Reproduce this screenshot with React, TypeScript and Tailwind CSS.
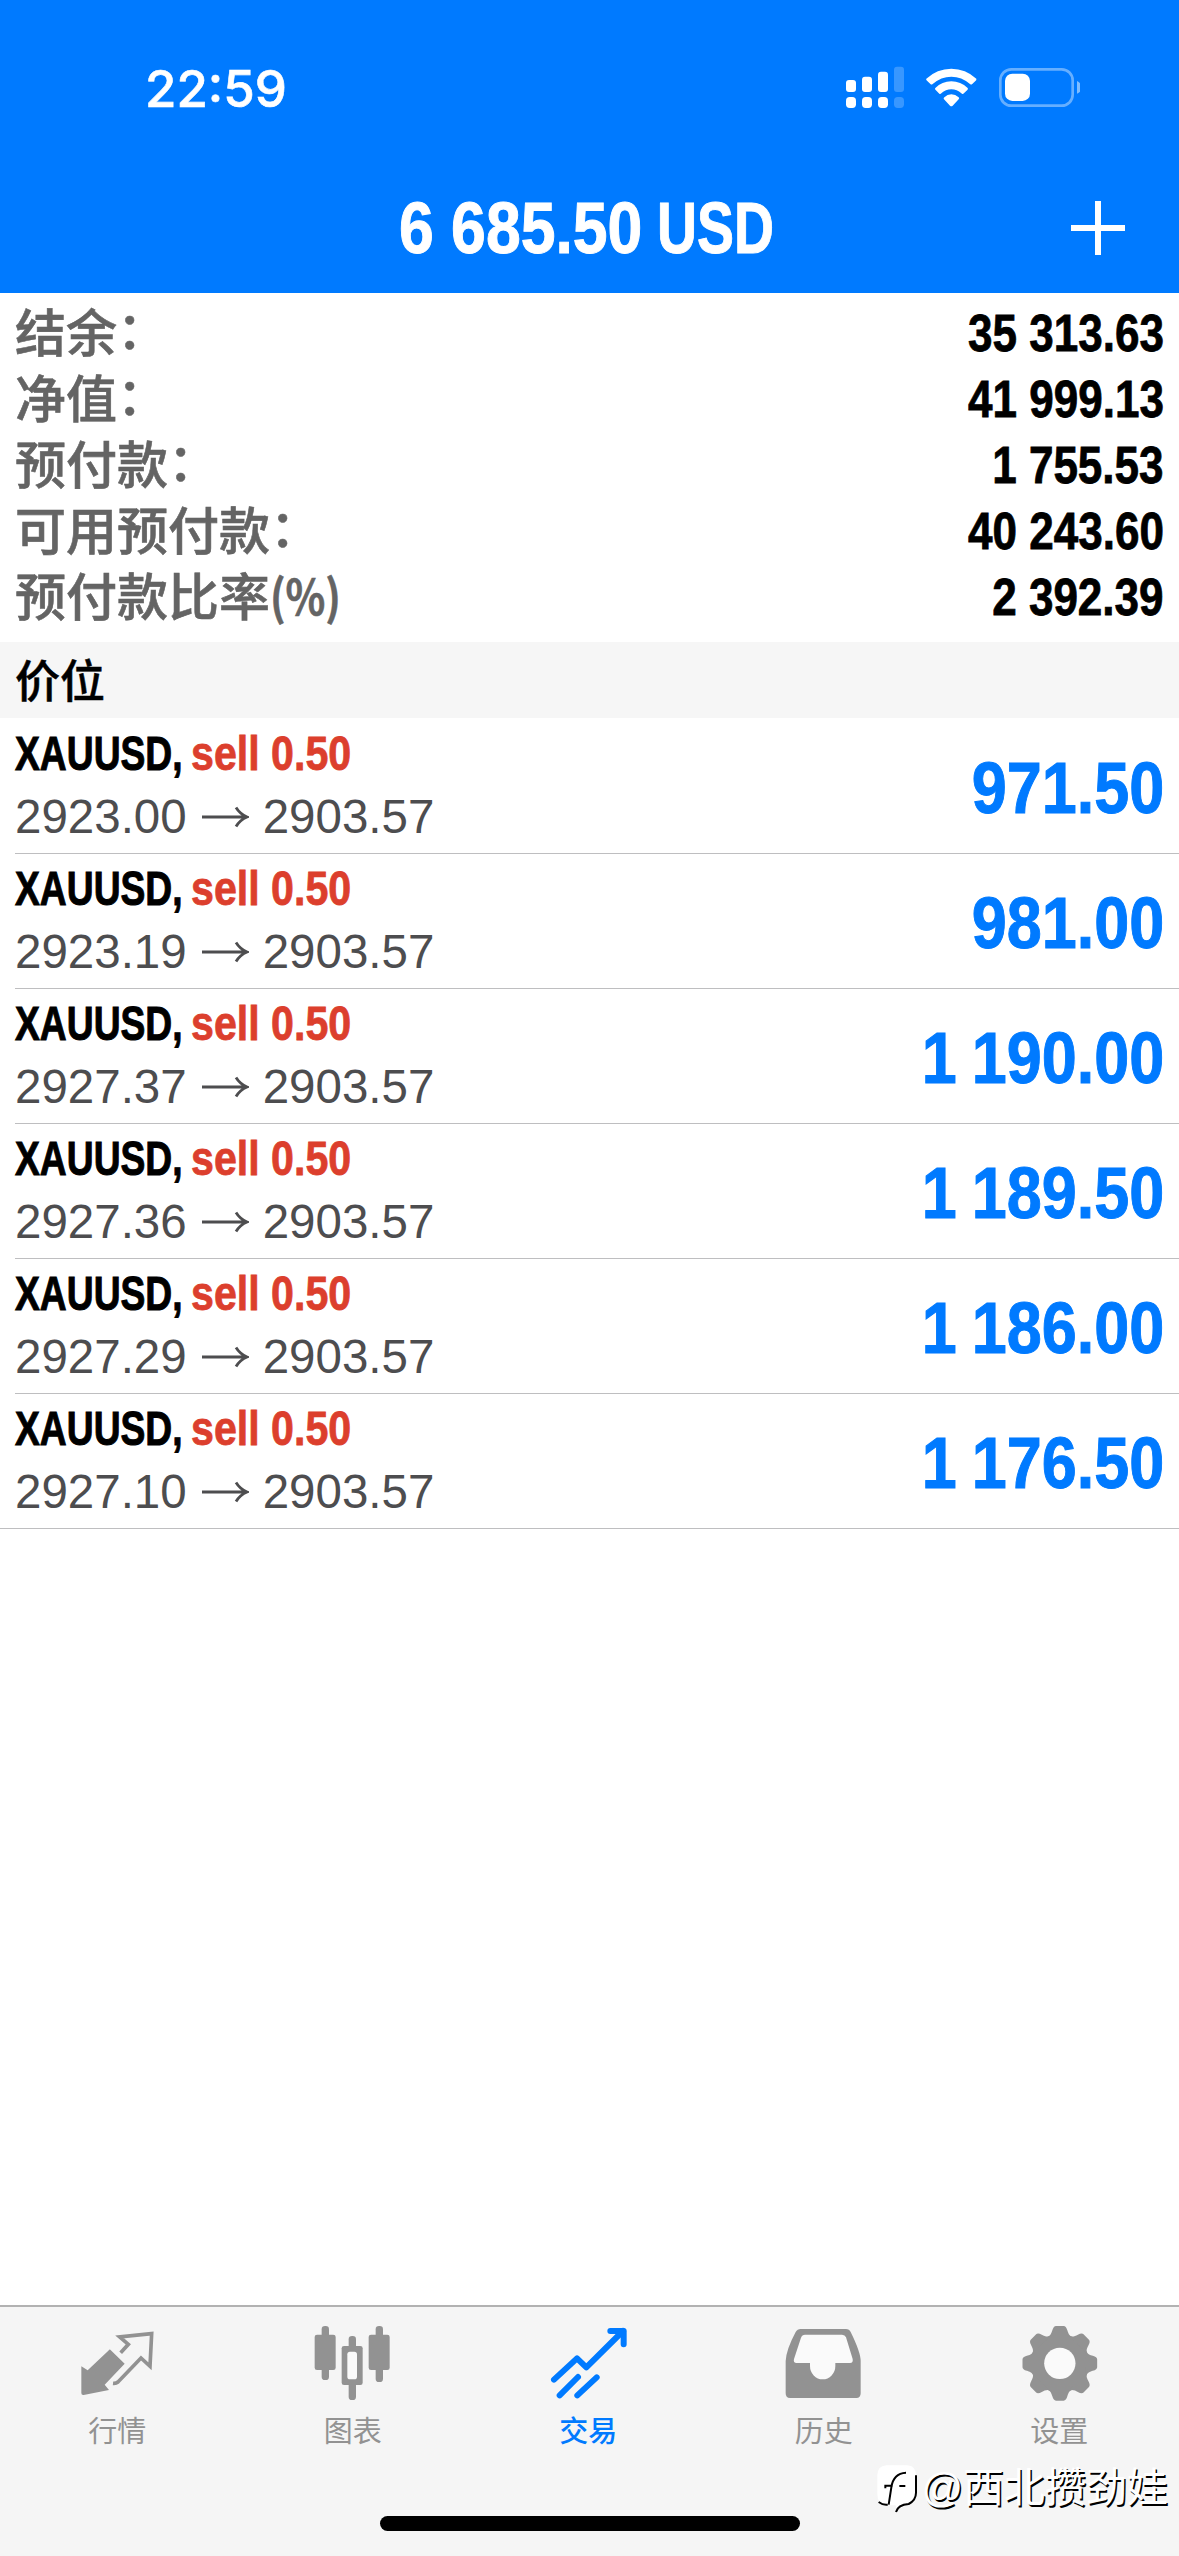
import type { ReactNode } from "react";

const summary = [
  { label: "结余", suffix: "：", value: "35 313.63" },
  { label: "净值", suffix: "：", value: "41 999.13" },
  { label: "预付款", suffix: "：", value: "1 755.53" },
  { label: "可用预付款", suffix: "：", value: "40 243.60" },
  { label: "预付款比率", suffix: "(%)", value: "2 392.39" },
];

const positions = [
  { open: "2923.00", profit: "971.50" },
  { open: "2923.19", profit: "981.00" },
  { open: "2927.37", profit: "1 190.00" },
  { open: "2927.36", profit: "1 189.50" },
  { open: "2927.29", profit: "1 186.00" },
  { open: "2927.10", profit: "1 176.50" },
];

function StatusBar() {
  return (
    <div className="flex h-[176px] items-center justify-between pl-[145px] pr-[99px]">
      <span className="pt-px font-['Inter'] text-[51px] font-medium leading-[60px] [-webkit-text-stroke:0.600px_#fff]">22:59</span>
      <svg className="h-[60px] w-[240px]" viewBox="60 54 720 180" fill="#fff">
        <rect x="78" y="120" width="30" height="36" rx="9" />
        <rect x="126" y="110" width="30" height="46" rx="9" />
        <rect x="174" y="95" width="30" height="61" rx="9" />
        <rect x="222" y="80" width="30" height="76" rx="9" opacity=".22" />
        <rect x="78" y="171" width="30" height="33" rx="11" />
        <rect x="126" y="171" width="30" height="33" rx="11" />
        <rect x="174" y="171" width="30" height="33" rx="11" />
        <rect x="222" y="171" width="30" height="33" rx="11" opacity=".22" />
        <path d="M319 116Q351 86 394 86T469 116Q470 120 467 122L456 133Q453 135 450 132Q425 110 394 110T338 132Q335 135 332 133L321 122Q317 119 319 116Z" />
        <path d="M346 144Q366 124 394 124T443 144Q445 147 442 150L430 161Q427 163 424 160Q411 148 394 148T364 160Q361 163 358 161L347 150Q343 147 346 144Z" />
        <path d="M373 172Q382 163 394 163T416 172Q419 175 416 178L398 197Q394 201 390 197L372 178Q369 175 373 172Z" />
        <rect x="541" y="88" width="217" height="109" rx="33" fill="none" stroke="#fff" strokeWidth="8" opacity=".4" />
        <rect x="555" y="101" width="75" height="82" rx="22" />
        <path d="M771 123Q784 129 784 143T771 161Z" opacity=".5" />
      </svg>
    </div>
  );
}

function TitleBar() {
  return (
    <div className="flex h-[117px] items-center justify-between pl-[399px] pr-[53px] pb-[14px]">
      <h1 className="flex h-[84px] w-[380px] whitespace-nowrap text-[72px] font-bold leading-[84px] [-webkit-text-stroke:1px_#fff]">
        <span className="w-[258px] origin-left scale-x-[.868]">6 685.50</span>
        <span className="w-[122px] origin-left scale-x-[.77]">USD</span>
      </h1>
      <svg className="h-[56px] w-[56px]" viewBox="0 0 56 56" stroke="#fff" strokeWidth="6">
        <path d="M28 1V55M1 28H55" />
      </svg>
    </div>
  );
}

function Arrow() {
  return (
    <svg className="mx-[14px] h-[24px] w-[48px]" viewBox="0 0 48 24" fill="none" stroke="#4d4d4f" strokeWidth="2.8">
      <path d="M1 12H46M35 2.5Q39 9 46 12Q39 15 35 21.5" />
    </svg>
  );
}

function Position({ open, profit, last }: { open: string; profit: string; last: boolean }) {
  return (
    <div className={last ? "" : "pl-[15px]"}>
      <div className={last ? "h-[135px] border-b border-[#bebec0] pl-[15px]" : "h-[135px] border-b border-[#bebec0]"}>
        <div className="flex items-center justify-between pr-[15px]">
          <div className="h-[134px] pt-[2px]">
            <div className="flex h-[65px] whitespace-nowrap text-[49px] font-bold leading-[64px]">
              <span className="w-[176px] origin-left scale-x-[.76] text-black [-webkit-text-stroke:1px_#000]">XAUUSD,</span>
              <span className="w-[160px] origin-left scale-x-[.84] text-[#dc3f2d] [-webkit-text-stroke:0.800px_#dc3f2d]">sell 0.50</span>
            </div>
            <div className="flex h-[62px] items-center text-[47.500px] leading-[62px] text-[#4d4d4f]">
              <span>{open}</span>
              <Arrow />
              <span>2903.57</span>
            </div>
          </div>
          <span className="origin-right scale-x-[.862] whitespace-nowrap pt-[4px] text-[73px] font-bold leading-[84px] text-[#007aff] [word-spacing:-3px] [-webkit-text-stroke:1px_#007aff]">
            {profit}
          </span>
        </div>
      </div>
    </div>
  );
}

function Tab({ label, active, viewBox, children }: { label: string; active?: boolean; viewBox: string; children: ReactNode }) {
  return (
    <div className={active ? "flex w-[235.5px] flex-col items-center text-[#007aff]" : "flex w-[235.5px] flex-col items-center text-[#929292]"}>
      <svg className="h-[80px] w-[80px]" viewBox={viewBox} fill="currentColor">
        {children}
      </svg>
      <span className={active ? "mt-[11px] pr-[1px] text-[29px] font-medium leading-[40px]" : "mt-[11px] pr-[1px] text-[29px] leading-[40px]"}>{label}</span>
    </div>
  );
}

function TabBar() {
  return (
    <nav className="relative flex h-[251px] border-t-2 border-[#b2b2b2] bg-[#f5f5f5] pt-[14px]">
      <Tab label="行情" viewBox="233 93 240 240">
        <path d="M330 179L373 221L313 284L326 300L250 315Q243 316 243 309V229L262 241L324 182Q328 177 330 179Z" />
        <path d="M361 188L384 163L358 141L454 131L449 229L422 204L353 276Q347 281 338 280" fill="none" stroke="currentColor" strokeWidth="11" />
      </Tab>
      <Tab label="图表" viewBox="940 93 240 240">
        <rect x="966" y="108" width="22" height="162" rx="10" />
        <rect x="945" y="134" width="63" height="106" rx="7" />
        <rect x="1128" y="108" width="22" height="168" rx="10" />
        <rect x="1107" y="134" width="63" height="106" rx="7" />
        <rect x="1047" y="138" width="22" height="192" rx="10" />
        <rect x="1026" y="168" width="63" height="117" rx="7" />
        <rect x="1043" y="185" width="29" height="83" rx="8" fill="#fafafa" />
      </Tab>
      <Tab label="交易" active viewBox="146 93 240 240">
        <g fill="none" stroke="currentColor" strokeWidth="18" strokeLinecap="round" strokeLinejoin="round">
          <path d="M161 269L230 205L258 232L368 123" />
          <path d="M330 123H370V163" />
          <path d="M178 316L233 261M231 316L289 262" />
        </g>
      </Tab>
      <Tab label="历史" viewBox="853 93 240 240">
        <path d="M903 117H1039Q1049 117 1053 126Q1083 187 1083 213V310Q1083 324 1070 324H871Q858 324 858 310V213Q860 178 888 126Q893 117 903 117Z" />
        <path d="M916 134H1027Q1036 134 1039 142L1059 207Q1061 219 1051 219H1007V228A37 39 0 0 1 931 228V219H891Q880 219 883 207L904 143Q907 134 916 134Z" fill="#fafafa" />
      </Tab>
      <Tab label="设置" viewBox="479 93 240 240">
        <circle cx="598.500" cy="220" r="88" />
        {[0, 45, 90, 135, 180, 225, 270, 315].map((angle) => (
          <path
            key={angle}
            transform={`rotate(${angle} 598.500 220)`}
            d="M562 142C572 135 573 129 576 121Q580 108 587 108H610Q617 108 621 121C624 129 625 135 635 142Z"
          />
        ))}
        <circle cx="598.500" cy="220" r="47" fill="#fafafa" />
      </Tab>
      <div className="absolute left-[380px] top-[209px] h-[15px] w-[420px] rounded-full bg-black" />
      <div className="absolute right-[11px] top-[155px] flex items-center whitespace-nowrap">
        <svg className="mr-[3px] mt-[2px] h-[50px] w-[42px]" viewBox="44 536 126 150">
          <path d="M75 540H136Q164 540 164 574V620Q164 650 136 660L106 674L103 660H76Q48 658 48 626V570Q48 542 75 540Z" fill="#fff" />
          <path d="M82 658L90 606Q96 564 134 562M72 609V601H94M114 602H132M52 650Q65 660 79 658M164 570V622Q164 644 142 656Q110 658 104 680" fill="none" stroke="#000" strokeWidth="6" />
        </svg>
        <span className="text-[41px] leading-[52px] text-white [text-shadow:1.500px_1.500px_0_#000]">@西北攒劲娃</span>
      </div>
    </nav>
  );
}

export default function App() {
  return (
    <div
      lang="zh-CN"
      className="flex h-[2556px] w-[1179px] flex-col overflow-hidden bg-white font-['Liberation_Sans','Noto_Sans_CJK_SC',sans-serif]"
    >
      <header className="h-[293px] bg-[#007aff] text-white">
        <StatusBar />
        <TitleBar />
      </header>
      <section className="h-[349px] pt-[8px]">
        {summary.map((row) => (
          <div key={row.label} className="flex h-[66px] items-center justify-between pl-[15px] pr-[15px]">
            <div className="flex h-[66px] pb-[4px] font-['Noto_Sans_CJK_SC',sans-serif] text-[51px] font-medium leading-[58px] text-[#646464] [-webkit-text-stroke:0.600px_#646464]">
              <span>{row.label}</span>
              {row.suffix === "：" ? (
                <span className="-translate-y-[3px]">{row.suffix}</span>
              ) : (
                <span className="origin-left scale-x-[.86] text-[48px] font-bold">{row.suffix}</span>
              )}
            </div>
            <span className="origin-right scale-x-[.863] text-[51px] font-bold leading-[66px] text-black [-webkit-text-stroke:0.800px_#000]">
              {row.value}
            </span>
          </div>
        ))}
      </section>
      <h2 className="h-[76px] bg-[#f6f6f6] pl-[15px] font-['Noto_Sans_CJK_SC',sans-serif] text-[45px] font-medium leading-[73px] text-black [-webkit-text-stroke:0.500px_#000]">
        价位
      </h2>
      <main className="flex-1 pt-[1px]">
        {positions.map((p, i) => (
          <Position key={p.open} open={p.open} profit={p.profit} last={i === positions.length - 1} />
        ))}
      </main>
      <TabBar />
    </div>
  );
}
